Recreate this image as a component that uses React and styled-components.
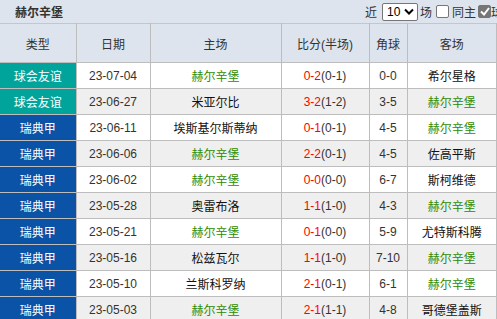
import React from 'react';
import styled, { createGlobalStyle } from 'styled-components';

const GlobalStyle = createGlobalStyle`
    body {
        margin: 0;
        background: #fff;
        font-family: "Liberation Sans", "Noto Sans CJK SC", sans-serif;
        overflow: hidden;
    }
`;

const Page = styled.div`
    width: 497px;
    overflow: hidden;
    font-size: 12px;
    color: #333;
`;

const TitleBar = styled.div`
    display: flex;
    align-items: center;
    height: 23px;
    background: #dde4ee;
`;

const Title = styled.div`
    flex: 0 0 auto;
    width: 350px;
    padding-left: 15px;
    font-weight: bold;
    color: #333;
`;

const Controls = styled.div`
    flex: 0 0 auto;
    display: flex;
    align-items: center;
    color: #333;
    white-space: nowrap;
`;

const Label = styled.span`
    margin-left: ${p => p.gap || 0}px;
`;

const FakeSelect = styled.span`
    display: flex;
    align-items: center;
    justify-content: space-between;
    box-sizing: border-box;
    width: 36px;
    height: 18px;
    margin-left: 5px;
    padding: 0 3px 0 4px;
    background: #fff;
    border: 1px solid #767676;
    border-radius: 2px;
    color: #000;
`;

const Check = styled.span`
    display: inline-flex;
    align-items: center;
    justify-content: center;
    flex: 0 0 auto;
    box-sizing: border-box;
    width: 13px;
    height: 13px;
    margin-left: ${p => p.gap || 0}px;
    border-radius: 2px;
    border: 1px solid #767676;
    background: ${p => (p.checked ? '#767676' : '#fff')};
`;

const Table = styled.table`
    width: 497px;
    border-collapse: collapse;
    table-layout: fixed;
`;

const Th = styled.th`
    height: 38px;
    padding: 0;
    font-weight: normal;
    background: #dde4ee;
    border: 1px solid #bdbdbd;
    border-top-color: #c6c6c6;
    color: #333;
    &:first-child { border-left: none; }
`;

const Td = styled.td`
    height: 25px;
    padding: 0;
    text-align: center;
    white-space: nowrap;
    border: 1px solid #bdbdbd;
    background: ${p => (p.alt ? '#efefef' : '#fff')};
    color: #333;
    &:first-child { border-left: none; }
`;

const TypeCell = styled(Td)`
    background: ${p => (p.kind === 'friendly' ? '#00a49b' : '#0b53a6')};
    color: #fff;
`;

const Team = styled.span`
    color: ${p => (p.home ? '#2d8a00' : '#111')};
`;

const Score = styled.span`
    color: #f00;
`;

const rows = [
    ['friendly', '球会友谊', '23-07-04', '赫尔辛堡', '0-2', '(0-1)', '0-0', '希尔星格'],
    ['friendly', '球会友谊', '23-06-27', '米亚尔比', '3-2', '(1-2)', '3-5', '赫尔辛堡'],
    ['league', '瑞典甲', '23-06-11', '埃斯基尔斯蒂纳', '0-1', '(0-1)', '4-5', '赫尔辛堡'],
    ['league', '瑞典甲', '23-06-06', '赫尔辛堡', '2-2', '(0-1)', '4-5', '佐高平斯'],
    ['league', '瑞典甲', '23-06-02', '赫尔辛堡', '0-0', '(0-0)', '6-7', '斯柯维德'],
    ['league', '瑞典甲', '23-05-28', '奥雷布洛', '1-1', '(1-0)', '4-3', '赫尔辛堡'],
    ['league', '瑞典甲', '23-05-21', '赫尔辛堡', '0-1', '(0-0)', '5-9', '尤特斯科腾'],
    ['league', '瑞典甲', '23-05-16', '松兹瓦尔', '1-1', '(1-0)', '7-10', '赫尔辛堡'],
    ['league', '瑞典甲', '23-05-10', '兰斯科罗纳', '2-1', '(0-1)', '6-1', '赫尔辛堡'],
    ['league', '瑞典甲', '23-05-03', '赫尔辛堡', '2-1', '(1-1)', '4-8', '哥德堡盖斯'],
];

const TEAM = '赫尔辛堡';

export default function App() {
    return (
        <Page>
            <GlobalStyle />
            <TitleBar>
                <Title>赫尔辛堡</Title>
                <Controls>
                    <Label>近</Label>
                    <FakeSelect>
                        <span>10</span>
                        <svg width="10" height="7" viewBox="0 0 10 7">
                            <path d="M1 1.5 L5 5.5 L9 1.5" fill="none" stroke="#000" strokeWidth="2" />
                        </svg>
                    </FakeSelect>
                    <Label gap={2}>场</Label>
                    <Check gap={4} />
                    <Label gap={3}>同主</Label>
                    <Check gap={2} checked>
                        <svg width="10" height="9" viewBox="0 0 10 9">
                            <path d="M1 4.5 L4 7.5 L9 1" fill="none" stroke="#fff" strokeWidth="2" />
                        </svg>
                    </Check>
                    <Label>球</Label>
                </Controls>
            </TitleBar>
            <Table>
                <colgroup>
                    <col style={{ width: 76 }} />
                    <col style={{ width: 74 }} />
                    <col style={{ width: 131 }} />
                    <col style={{ width: 88 }} />
                    <col style={{ width: 38 }} />
                    <col />
                </colgroup>
                <thead>
                    <tr>
                        <Th>类型</Th>
                        <Th>日期</Th>
                        <Th>主场</Th>
                        <Th>比分(半场)</Th>
                        <Th>角球</Th>
                        <Th>客场</Th>
                    </tr>
                </thead>
                <tbody>
                    {rows.map((r, i) => {
                        const alt = i % 2 === 1;
                        return (
                            <tr key={i}>
                                <TypeCell kind={r[0]}>{r[1]}</TypeCell>
                                <Td alt={alt}>{r[2]}</Td>
                                <Td alt={alt}><Team home={r[3] === TEAM}>{r[3]}</Team></Td>
                                <Td alt={alt}><Score>{r[4]}</Score>{r[5]}</Td>
                                <Td alt={alt}>{r[6]}</Td>
                                <Td alt={alt}><Team home={r[7] === TEAM}>{r[7]}</Team></Td>
                            </tr>
                        );
                    })}
                </tbody>
            </Table>
        </Page>
    );
}
